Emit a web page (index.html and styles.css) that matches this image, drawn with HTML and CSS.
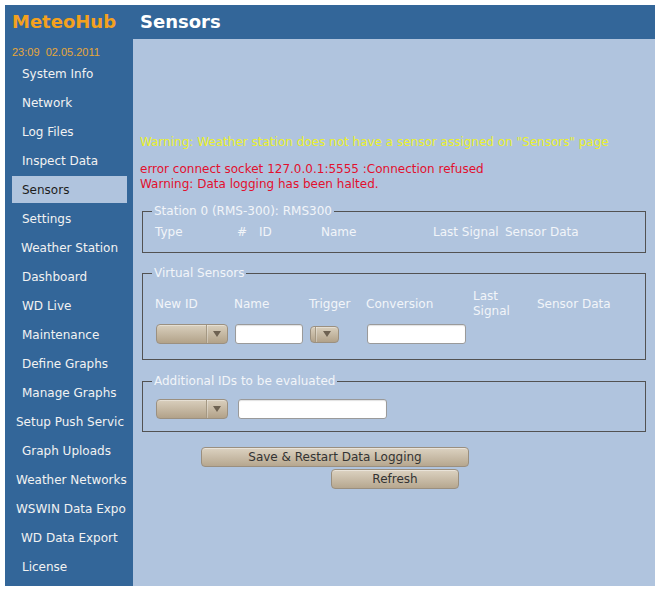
FILE: index.html
```html
<!DOCTYPE html>
<html lang="en">
<head>
<meta charset="utf-8">
<title>MeteoHub - Sensors</title>
<link rel="stylesheet" href="styles.css">
</head>
<body>
<div class="page">
  <div class="brand">MeteoHub</div>
  <div class="title">Sensors</div>
  <nav class="sidebar">
    <div class="clock">23:09&nbsp;&nbsp;02.05.2011</div>
    <a class="nav-item">System Info</a>
    <a class="nav-item">Network</a>
    <a class="nav-item">Log Files</a>
    <a class="nav-item">Inspect Data</a>
    <a class="nav-item active">Sensors</a>
    <a class="nav-item">Settings</a>
    <a class="nav-item nav-mid">Weather Station</a>
    <a class="nav-item">Dashboard</a>
    <a class="nav-item">WD Live</a>
    <a class="nav-item">Maintenance</a>
    <a class="nav-item">Define Graphs</a>
    <a class="nav-item">Manage Graphs</a>
    <a class="nav-item nav-wide">Setup Push Servic</a>
    <a class="nav-item">Graph Uploads</a>
    <a class="nav-item nav-wide">Weather Networks</a>
    <a class="nav-item nav-wide">WSWIN Data Expo</a>
    <a class="nav-item nav-mid">WD Data Export</a>
    <a class="nav-item">License</a>
  </nav>
  <main class="content">
    <p class="warn">Warning: Weather station does not have a sensor assigned on "Sensors" page</p>
    <div class="errors">
      <div>error connect socket 127.0.0.1:5555 :Connection refused</div>
      <div>Warning: Data logging has been halted.</div>
    </div>

    <fieldset class="box box-station">
      <legend>Station 0 (RMS-300): RMS300</legend>
      <div class="station-head">
        <span>Type</span><span>#</span><span>ID</span><span>Name</span><span>Last Signal</span><span>Sensor Data</span>
      </div>
    </fieldset>

    <fieldset class="box box-virtual">
      <legend>Virtual Sensors</legend>
      <div class="vs-grid">
        <span>New ID</span>
        <span>Name</span>
        <span>Trigger</span>
        <span>Conversion</span>
        <span>Last<br>Signal</span>
        <span>Sensor Data</span>
        <div class="select sel-id"><span class="sel-body"></span><span class="sel-arrow"><i class="tri"></i></span></div>
        <input class="field f-name" type="text">
        <div class="select sel-trig"><span class="sel-body"></span><span class="sel-arrow"><i class="tri"></i></span></div>
        <input class="field f-conv" type="text">
      </div>
    </fieldset>

    <fieldset class="box box-extra">
      <legend>Additional IDs to be evaluated</legend>
      <div class="extra-row">
        <div class="select sel-id"><span class="sel-body"></span><span class="sel-arrow"><i class="tri"></i></span></div>
        <input class="field f-extra" type="text">
      </div>
    </fieldset>

    <div class="actions">
      <button class="btn btn-save" type="button">Save &amp; Restart Data Logging</button>
      <button class="btn btn-refresh" type="button">Refresh</button>
    </div>
  </main>
</div>
</body>
</html>
```

FILE: styles.css
```css
html, body {
  background: #ffffff;
}
body {
  margin: 5px;
  font-family: "DejaVu Sans", "Liberation Sans", sans-serif;
  font-size: 12px;
  line-height: 15px;
}
.page {
  display: grid;
  grid-template-columns: 128px 522px;
  grid-template-rows: 34px 547px;
  width: 650px;
}
.brand, .title {
  background: #336699;
  font-size: 18px;
  font-weight: bold;
  line-height: 34px;
  padding-left: 7px;
  white-space: nowrap;
}
.brand { color: #f4a11e; }
.title { color: #ffffff; }

.sidebar {
  background: #336699;
  display: flex;
  flex-direction: column;
  overflow: hidden;
}
.clock {
  font-family: "Liberation Sans", Arial, sans-serif;
  font-size: 11px;
  color: #e6a63a;
  height: 16px;
  line-height: 14px;
  padding: 6px 0 0 7px;
  margin-bottom: -1px;
}
.nav-item {
  display: block;
  width: 115px;
  height: 27px;
  line-height: 28px;
  margin: 0 0 2px 7px;
  padding-left: 10px;
  box-sizing: border-box;
  color: #f2f2f2;
  white-space: nowrap;
  overflow: hidden;
  text-decoration: none;
}
.nav-mid { padding-left: 9px; }
.nav-wide { padding-left: 4px; }
.nav-item.active {
  background: #b0c4de;
  color: #1c1c1c;
}

.content {
  background: #b0c4de;
  padding: 96px 7px 0 7px;
}
.warn {
  margin: 0;
  color: #eaf02c;
}
.errors {
  margin-top: 12px;
  color: #e2102e;
}

.box {
  margin: 13px 2px 0 2px;
  padding: 0 4px 0 12px;
  border: 1px solid #525252;
  color: #f2f5f9;
  min-width: 0;
}
.box legend {
  margin-left: -3px;
  padding: 0 2px;
  line-height: 15px;
}
.box-station { margin-top: 12px; padding-top: 6px; padding-bottom: 12px; }
.box-virtual { padding-top: 8px; padding-bottom: 15px; }
.box-extra { margin-top: 14px; padding-top: 10px; padding-bottom: 12px; }

.station-head {
  display: grid;
  grid-template-columns: 82px 22px 62px 112px 72px auto;
  white-space: nowrap;
}

.vs-grid {
  display: grid;
  grid-template-columns: 79px 75px 57px 107px 64px auto;
  row-gap: 5px;
  align-items: center;
  white-space: nowrap;
}

.select {
  display: flex;
  box-sizing: border-box;
  height: 20px;
  margin-left: 1px;
  border: 1px solid #9b9080;
  border-radius: 4px;
  background: linear-gradient(#d9cfbd, #b2a289);
  box-shadow: inset 0 1px 0 rgba(255,255,255,0.35);
}
.sel-body { flex: 1; }
.sel-arrow {
  width: 20px;
  display: flex;
  align-items: center;
  justify-content: center;
  border-left: 1px solid #a49883;
  box-shadow: inset 1px 0 0 rgba(255,255,255,0.3);
}
.tri {
  width: 0;
  height: 0;
  border-left: 4px solid transparent;
  border-right: 4px solid transparent;
  border-top: 6px solid #6e6252;
}
.sel-id { width: 72px; }
.sel-trig { width: 29px; height: 17px; }
.sel-trig .sel-arrow { width: 22px; }

.field {
  display: block;
  box-sizing: border-box;
  height: 20px;
  margin: 0 0 0 1px;
  padding: 0 3px;
  border: 1px solid #9a9a9a;
  border-radius: 3px;
  background: #ffffff;
  box-shadow: inset 0 1px 1px rgba(0,0,0,0.12);
  font: inherit;
}
.f-name { width: 68px; }
.f-conv { width: 99px; }

.extra-row {
  display: flex;
  align-items: center;
  gap: 9px;
}
.f-extra { width: 149px; }

.actions {
  display: flex;
  flex-direction: column;
  align-items: flex-start;
}
.btn {
  display: block;
  box-sizing: border-box;
  height: 20px;
  padding: 0;
  border: 1px solid #9a8f7f;
  border-radius: 4px;
  background: linear-gradient(#dcd2c1, #b6a78f);
  box-shadow: inset 0 1px 0 rgba(255,255,255,0.4);
  color: #333333;
  font-family: "DejaVu Sans", sans-serif;
  font-size: 12px;
  line-height: 18px;
  text-align: center;
}
.btn-save {
  width: 268px;
  margin: 15px 0 0 61px;
}
.btn-refresh {
  width: 128px;
  margin: 2px 0 0 191px;
}
```
